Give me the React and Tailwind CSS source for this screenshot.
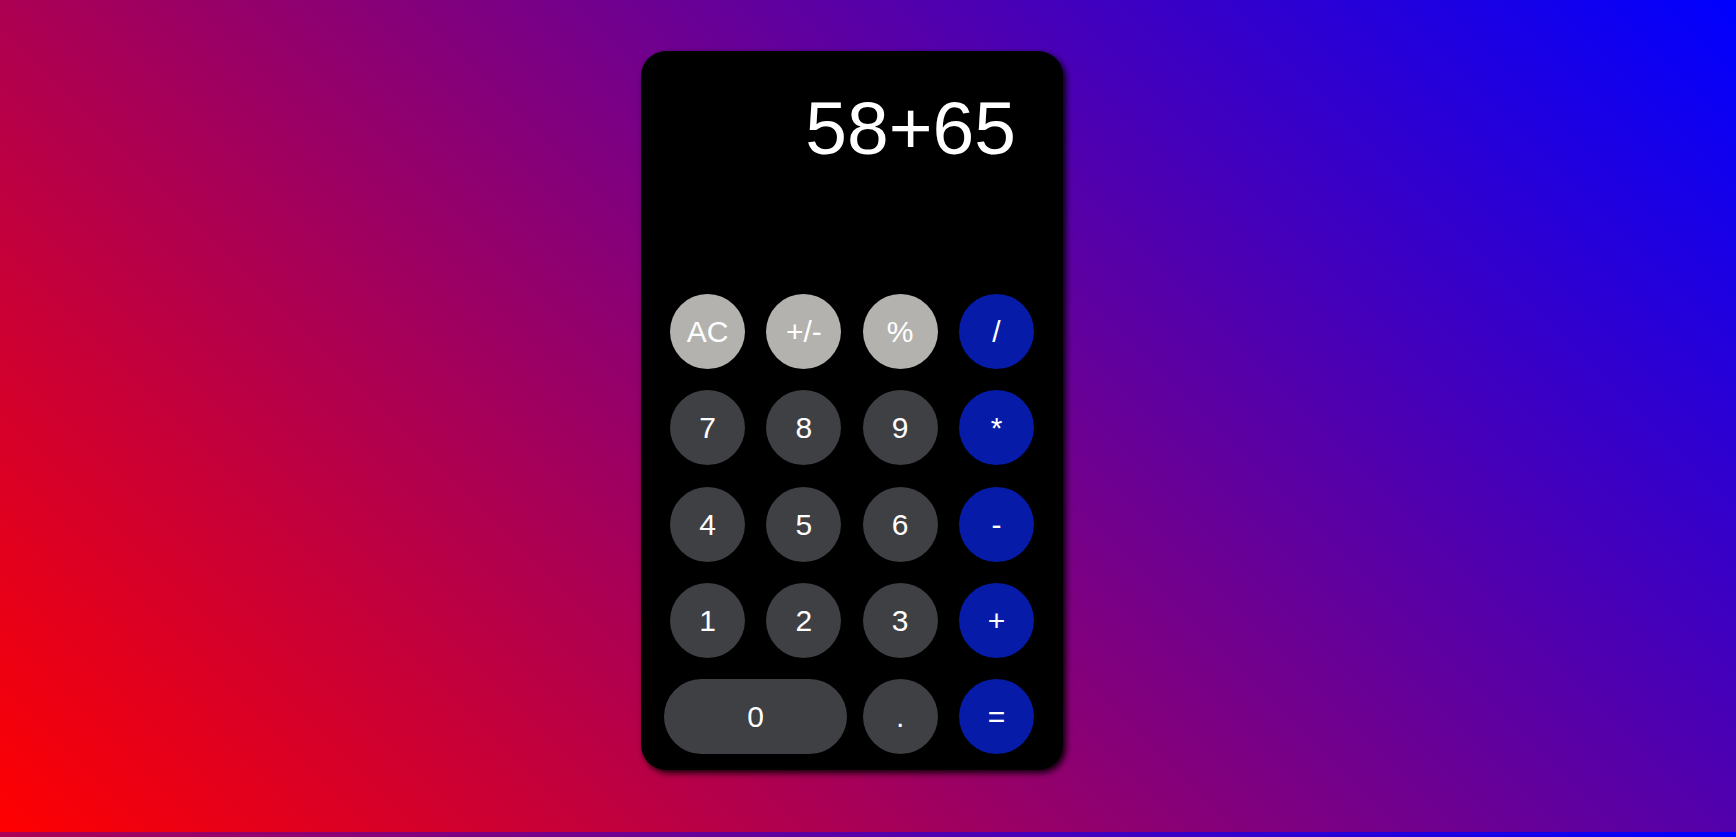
const keys = [
  { label: "AC", kind: "light" },
  { label: "+/-", kind: "light" },
  { label: "%", kind: "light" },
  { label: "/", kind: "op" },
  { label: "7" },
  { label: "8" },
  { label: "9" },
  { label: "*", kind: "op" },
  { label: "4" },
  { label: "5" },
  { label: "6" },
  { label: "-", kind: "op" },
  { label: "1" },
  { label: "2" },
  { label: "3" },
  { label: "+", kind: "op" },
  { label: "0", kind: "zero" },
  { label: "." },
  { label: "=", kind: "op" },
];

function Key({ label, kind }) {
  let color = "bg-[#3f4044]";
  if (kind === "light") color = "bg-[#b4b2ae]";
  if (kind === "op") color = "bg-[#061ca8]";

  const shape =
    kind === "zero"
      ? "col-span-2 w-[183px] justify-self-center"
      : "w-[75px]";

  return (
    <button
      className={`${color} ${shape} h-[75px] rounded-full text-white text-[30px] flex items-center justify-center`}
    >
      {label}
    </button>
  );
}

export default function App() {
  return (
    <div
      className="h-[837px] w-full bg-[linear-gradient(45deg,#ff0000,#0000ff)] bg-[length:100%_832px] bg-repeat flex justify-center items-start pt-[51px] pr-[32px]"
      style={{ fontFamily: '"Liberation Sans", Arial, sans-serif' }}
    >
      {/* Calculator */}
      <div className="w-[422px] h-[719px] bg-black rounded-[25px] shadow-[3px_3px_6px_rgba(0,0,0,0.9)] px-[29px] pt-[40px] pb-[16px] flex flex-col">
        {/* Display */}
        <div className="h-[203px] pr-[18px] text-right text-white text-[75px] leading-none">
          58+65
        </div>

        {/* Keys */}
        <div className="grid grid-cols-[repeat(4,75px)] justify-between gap-y-[21.25px]">
          {keys.map((k) => (
            <Key key={k.label} label={k.label} kind={k.kind} />
          ))}
        </div>
      </div>
    </div>
  );
}
